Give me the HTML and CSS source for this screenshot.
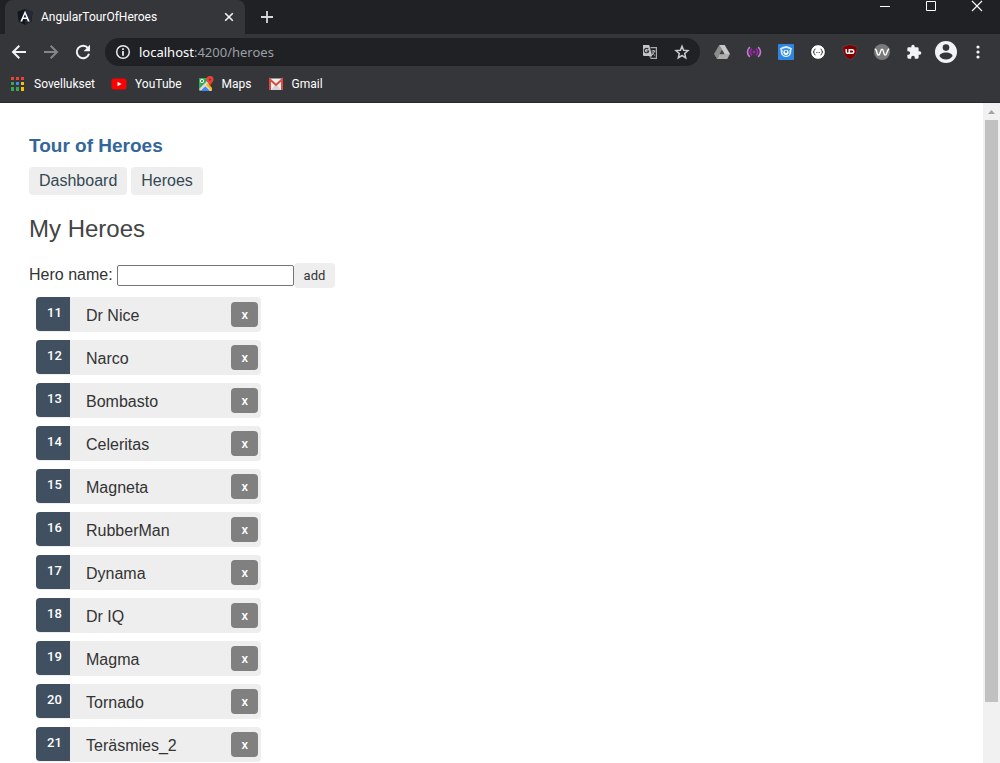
FILE: index.html
```html
<!DOCTYPE html>
<html lang="en">
<head>
<meta charset="utf-8">
<title>AngularTourOfHeroes</title>
<link rel="stylesheet" href="styles.css">
</head>
<body>
<header class="browser">
  <div class="tabstrip">
    <div class="tab">
      <svg class="favicon" width="16" height="16" viewBox="0 0 16 16"><path fill="#11151d" d="M8 0 15.5 2.7 14.3 12.5 8 16 1.7 12.5.5 2.7z"/><path fill="#242938" d="M8 0 15.5 2.7 14.3 12.5 8 16z"/><path fill="#fff" fill-rule="evenodd" d="M8 1.8 3.3 12.4h1.9l.9-2.4h3.8l.9 2.4h1.9zM8 5.3 9.4 8.5H6.6z"/></svg>
      <span class="tab-title">AngularTourOfHeroes</span>
      <button class="icon-btn" aria-label="Close tab"><svg width="16" height="16" viewBox="0 0 16 16"><path stroke="#f1f3f4" stroke-width="1.6" d="m4.2 4.2 7.6 7.6m0-7.6-7.6 7.6"/></svg></button>
    </div>
    <button class="icon-btn new-tab" aria-label="New tab"><svg width="16" height="16" viewBox="0 0 16 16"><path stroke="#d5d7da" stroke-width="1.8" d="M8 2v12M2 8h12"/></svg></button>
    <div class="window-controls">
      <button class="icon-btn" aria-label="Minimize"><svg width="12" height="12" viewBox="0 0 12 12"><path stroke="#fff" d="M1 6.500h10"/></svg></button>
      <button class="icon-btn" aria-label="Maximize"><svg width="12" height="12" viewBox="0 0 12 12"><path fill="none" stroke="#fff" d="M1.500 1.500h9v9h-9z"/></svg></button>
      <button class="icon-btn" aria-label="Close"><svg width="12" height="12" viewBox="0 0 12 12"><path stroke="#fff" stroke-width="1.100" d="m1 1 10 10M11 1 1 11"/></svg></button>
    </div>
  </div>
  <div class="toolbar">
    <div class="nav-buttons">
      <button class="icon-btn" aria-label="Back"><svg width="16" height="16" viewBox="0 0 16 16"><path fill="none" stroke="#f1f3f4" stroke-width="2" d="M15 8H2.500M8.300 1.700 2 8l6.300 6.300"/></svg></button>
      <button class="icon-btn" aria-label="Forward"><svg width="16" height="16" viewBox="0 0 16 16"><path fill="none" stroke="#85868a" stroke-width="2" d="M1 8h12.500M7.700 1.700 14 8l-6.300 6.300"/></svg></button>
      <button class="icon-btn" aria-label="Reload"><svg width="16" height="16" viewBox="0 0 16 16"><path fill="none" stroke="#f1f3f4" stroke-width="2" d="M13 4.200A6.200 6.200 0 1 0 14 9.800"/><path fill="#f1f3f4" d="M15 .8v6.400H8.600z"/></svg></button>
    </div>
    <div class="address">
      <svg width="16" height="16" viewBox="0 0 16 16"><circle cx="8" cy="8" r="6.300" fill="none" stroke="#e8eaed" stroke-width="1.500"/><path fill="#e8eaed" d="M7.100 7h1.800v4.700H7.100zM7.100 4.200h1.800V6H7.100z"/></svg>
      <span class="url"><span class="host">localhost</span>:4200/heroes</span>
      <button class="icon-btn" aria-label="Translate"><svg width="16" height="16" viewBox="0 0 16 16"><path fill="none" stroke="#a9abad" stroke-width="1.200" d="M8.500 3.600h5.900v10.800H8.500"/><path fill="#c4c6c8" d="M1 1h6.200L10.200 12H2q-1 0-1-1z"/><path fill="#85878a" d="M7 12h3.200l-2 2.600z"/><path fill="none" stroke="#303134" stroke-width="1.200" d="M6.300 5.200A2.200 2.200 0 1 0 6.700 7H4.600"/><path fill="none" stroke="#bfc1c3" d="M9.400 7h4M11.400 6v1M12.600 7q-.6 2.400-2.600 4M10.200 8.300q1 1.900 2.700 3.200"/></svg></button>
      <button class="icon-btn" aria-label="Bookmark"><svg width="16" height="16" viewBox="0 0 16 16"><path fill="none" stroke="#c8cacc" stroke-width="1.500" d="m8 2.200 1.600 4 4.400.4-3.300 2.900 1 4.300L8 11.500l-3.700 2.300 1-4.300L2 6.600l4.400-.4z"/></svg></button>
    </div>
    <div class="extensions">
      <button class="icon-btn" aria-label="Drive"><svg width="16" height="16" viewBox="0 0 16 16"><path fill="#8b8b8b" d="M5.200 1 8 5.800 3 15 0 10z"/><path fill="#c8c8c8" d="M5.200 1h5.500L16 10h-5.500z"/><path fill="#adadad" d="M5.500 10H16l-2.800 5H3z"/><path fill="#454649" d="m8 6.200 2.300 4H5.700z"/></svg></button>
      <button class="icon-btn" aria-label="Broadcast"><svg width="16" height="16" viewBox="0 0 16 16"><g fill="none" stroke-width="1.600"><path stroke="#c47bd0" d="M3.800 3Q-.8 8 3.800 13M12.200 3q4.600 5 0 10"/><path stroke="#a21fb5" d="M6 4.600Q2.700 8 6 11.400M10 4.600q3.300 3.400 0 6.800"/></g><circle cx="8" cy="8" r="1.400" fill="#a21fb5"/></svg></button>
      <button class="icon-btn" aria-label="Blue extension"><svg width="16" height="16" viewBox="0 0 16 16"><rect width="16" height="16" rx="1" fill="#2f86de"/><path fill="#d9ecfb" d="M1.800 4.400q6.200-5 12.400 0-1 .8-.9 3.400A5.300 5.300 0 0 1 2.700 7.800Q2.800 5.200 1.800 4.400z"/><path fill="none" stroke="#2f86de" stroke-width="1.200" d="M4 6q4-3 8 0"/><circle cx="8" cy="8.300" r="3.500" fill="#2f86de"/><circle cx="8" cy="8.300" r="2.600" fill="#fff"/><circle cx="8" cy="7.800" r="1.200" fill="#2f86de"/></svg></button>
      <button class="icon-btn" aria-label="JSON viewer"><svg width="16" height="16" viewBox="0 0 16 16"><circle cx="8" cy="8" r="7.400" fill="#fff" stroke="#222"/><g fill="none" stroke="#333"><path d="M5.500 5Q4.200 5 4.200 6.600T3 8q1.200 0 1.200 1.400T5.500 11M10.500 5q1.300 0 1.300 1.600T13 8q-1.200 0-1.200 1.400T10.500 11"/></g><path fill="#777" d="M6 8h1v1H6zM7.500 8h1v1h-1zM9 8h1v1H9z"/></svg></button>
      <button class="icon-btn" aria-label="Shield"><svg width="16" height="16" viewBox="0 0 16 16"><path fill="#800000" stroke="#575255" stroke-width=".6" d="M8 .4Q11 2 15 2.200C15 9 14.200 12.500 8 15.700 1.800 12.500 1 9 1 2.200 5 2 8 .4 8 .4z"/><g fill="none" stroke="#fff" stroke-width="1.400"><path d="M4.200 5v3q0 1.300 1.300 1.300h1.700V5"/><path d="M7.200 5.700H10q1.800 0 1.800 1.800T10 9.300H7.200"/></g></svg></button>
      <button class="icon-btn" aria-label="W extension"><svg width="16" height="16" viewBox="0 0 16 16"><circle cx="8" cy="8" r="8" fill="#7a7a7a"/><path fill="none" stroke="#fff" stroke-width="1.400" d="M.8 5q1.500.2 2 2.800.7 3.300 1.700 3.300c2 0 1.600-5.900 3.500-5.900s1.300 5.900 3.300 5.900S13 5 15.200 5"/></svg></button>
      <button class="icon-btn" aria-label="Extensions"><svg width="16" height="16" viewBox="0 0 24 24"><path fill="#f1f3f4" d="M20.500 11H19V7a2 2 0 0 0-2-2h-4V3.500a2.500 2.500 0 0 0-5 0V5H4a2 2 0 0 0-2 2v3.800h1.500a2.700 2.700 0 0 1 0 5.400H2V20a2 2 0 0 0 2 2h3.800v-1.500a2.700 2.700 0 0 1 5.400 0V22H17a2 2 0 0 0 2-2v-4h1.500a2.500 2.500 0 0 0 0-5z"/></svg></button>
      <button class="icon-btn" aria-label="Profile"><svg width="22" height="22" viewBox="0 0 22 22"><circle cx="11" cy="11" r="11" fill="#f1f3f4"/><circle cx="11" cy="6.600" r="3.300" fill="#35363a"/><path fill="#35363a" d="M4.500 15.300c0-2.500 3.500-3.700 6.500-3.700s6.500 1.200 6.500 3.700c-1.500 2-3.800 3.300-6.500 3.300s-5-1.300-6.500-3.300z"/></svg></button>
      <button class="icon-btn" aria-label="Menu"><svg width="16" height="16" viewBox="0 0 16 16"><g fill="#f1f3f4"><circle cx="8" cy="3" r="1.600"/><circle cx="8" cy="8" r="1.600"/><circle cx="8" cy="13" r="1.600"/></g></svg></button>
    </div>
  </div>
  <nav class="bookmarks" aria-label="Bookmarks">
    <a href="#"><svg width="16" height="16" viewBox="0 0 16 16"><path fill="#ea4335" d="M1 1h3v3H1zM6 1h3v3H6zM11 1h3v3h-3z"/><path fill="#34a853" d="M1 6h3v3H1zM1 11h3v4H1zM6 11h3v4H6z"/><path fill="#4285f4" d="M6 6h3v3H6z"/><path fill="#fbbc05" d="M11 6h3v3h-3zM11 11h3v4h-3z"/></svg>Sovellukset</a>
    <a href="#"><svg width="16" height="16" viewBox="0 0 16 16"><rect x=".5" y="2.500" width="15" height="11" rx="2.500" fill="#f00"/><path fill="#fff" d="m6.500 5.700 4.200 2.300-4.200 2.300z"/></svg>YouTube</a>
    <a href="#"><svg width="16" height="16" viewBox="0 0 16 16"><path fill="#34a853" d="M1 2h10v6L2 15H1z"/><path fill="#d5d9dd" d="m1 13 8-8 5 9-1 1H11L7 11l-4 4z"/><path fill="#4285f4" d="m3 15 4.500-4.500L12 15z"/><path fill="#fbbc05" d="m8 9 2-2 4 5v3z"/><circle cx="4" cy="5" r="1.700" fill="none" stroke="#fff"/><path fill="#ea4335" d="M12 0a3.500 3.500 0 0 1 3.500 3.600C15.500 6.500 12.600 7 12 11 11.400 7 8.500 6.500 8.500 3.600A3.500 3.500 0 0 1 12 0z"/><circle cx="12" cy="3.600" r="1.200" fill="#9f2c25"/></svg>Maps</a>
    <a href="#"><svg width="16" height="16" viewBox="0 0 16 16"><rect x="1" y="2.500" width="14" height="11.500" rx="1" fill="#f1f1f1"/><path fill="#d5d5d5" d="m3 14 5-6 5 6z"/><path fill="none" stroke="#dd4b3e" stroke-width="2" d="M2 14V3.500l6 5.500 6-5.500V14"/></svg>Gmail</a>
  </nav>
</header>
<div class="viewport">
  <main class="page">
    <h1>Tour of Heroes</h1>
    <nav class="routes">
      <a href="#">Dashboard</a>
      <a href="#">Heroes</a>
    </nav>
    <h2>My Heroes</h2>
    <form class="add-form">
      <label for="hero-name">Hero name:</label>
      <input id="hero-name" type="text">
      <button type="button">add</button>
    </form>
    <ul class="heroes">
      <li><a href="#"><span class="badge">11</span><span class="name">Dr Nice</span></a><button class="delete" title="delete hero">x</button></li>
      <li><a href="#"><span class="badge">12</span><span class="name">Narco</span></a><button class="delete" title="delete hero">x</button></li>
      <li><a href="#"><span class="badge">13</span><span class="name">Bombasto</span></a><button class="delete" title="delete hero">x</button></li>
      <li><a href="#"><span class="badge">14</span><span class="name">Celeritas</span></a><button class="delete" title="delete hero">x</button></li>
      <li><a href="#"><span class="badge">15</span><span class="name">Magneta</span></a><button class="delete" title="delete hero">x</button></li>
      <li><a href="#"><span class="badge">16</span><span class="name">RubberMan</span></a><button class="delete" title="delete hero">x</button></li>
      <li><a href="#"><span class="badge">17</span><span class="name">Dynama</span></a><button class="delete" title="delete hero">x</button></li>
      <li><a href="#"><span class="badge">18</span><span class="name">Dr IQ</span></a><button class="delete" title="delete hero">x</button></li>
      <li><a href="#"><span class="badge">19</span><span class="name">Magma</span></a><button class="delete" title="delete hero">x</button></li>
      <li><a href="#"><span class="badge">20</span><span class="name">Tornado</span></a><button class="delete" title="delete hero">x</button></li>
      <li><a href="#"><span class="badge">21</span><span class="name">Teräsmies_2</span></a><button class="delete" title="delete hero">x</button></li>
    </ul>
  </main>
  <div class="scrollbar" aria-hidden="true">
    <svg width="17" height="17" viewBox="0 0 17 17"><path fill="#a3a3a3" d="m5 11 3.500-4 3.500 4z"/></svg>
    <div class="thumb"></div>
    <div class="track"></div>
  </div>
</div>
</body>
</html>
```

FILE: styles.css
```css
* { box-sizing: border-box; }

body {
  margin: 0;
  height: 100vh;
  display: flex;
  flex-direction: column;
  overflow: hidden;
  background: #fff;
  color: #333;
  font: 16px/20px "Liberation Sans", Arial, sans-serif;
}

a { color: inherit; text-decoration: none; }
button { border: 0; font-family: Roboto, Arial, sans-serif; cursor: pointer; }
svg { display: block; flex: none; }

/* Browser frame */
.browser {
  flex: none;
  background: #35363a;
  border-bottom: 1px solid #28292b;
  color: #fff;
  font: 12px/16px Roboto, "Open Sans", sans-serif;
}

.icon-btn { padding: 0; background: none; }

.tabstrip {
  display: flex;
  height: 34px;
  padding-left: 5px;
  background: #202124;
}

.tab {
  display: flex;
  align-items: center;
  width: 240px;
  padding: 0 8px 0 12px;
  border-radius: 8px 8px 0 0;
  background: #35363a;
}

.tab-title { flex: 1; margin-left: 8px; }
.new-tab { margin-left: 14px; }

.window-controls {
  display: flex;
  align-items: flex-start;
  gap: 34px;
  margin-left: auto;
  padding-right: 17px;
}

.toolbar {
  display: flex;
  align-items: center;
  height: 36px;
  padding: 0 14px 0 11px;
}

.nav-buttons { display: flex; gap: 16px; }

.address {
  flex: 1;
  display: flex;
  align-items: center;
  gap: 16px;
  height: 28px;
  margin-left: 14px;
  padding: 0 10px;
  border-radius: 14px;
  background: #202124;
}

.url {
  flex: 1;
  margin-left: -8px;
  color: #9aa0a6;
  font-family: "Noto Sans", "Open Sans", sans-serif;
  font-size: 13px;
}

.host { color: #fff; }

.extensions {
  display: flex;
  align-items: center;
  gap: 16px;
  margin-left: 14px;
}

.extensions .icon-btn:nth-last-child(2) { margin: 0 -3px; }

.bookmarks {
  display: flex;
  gap: 16px;
  height: 32px;
  padding: 0 10px 4px;
}

.bookmarks a {
  display: flex;
  align-items: center;
  gap: 8px;
}

/* Page */
.viewport {
  flex: 1;
  display: flex;
  min-height: 0;
}

.page {
  flex: 1;
  padding: 32px 29px 0;
  overflow: hidden;
}

h1 {
  margin: 0 0 10px;
  color: #369;
  font-size: 19px;
  line-height: 22px;
}

.routes { display: flex; gap: 4px; }

.routes a {
  padding: 4px 10px;
  border-radius: 4px;
  background: #eee;
  color: #334953;
}

h2 {
  margin: 20px 0;
  color: #444;
  font-size: 24px;
  font-weight: 400;
  line-height: 28px;
}

.add-form { display: flex; align-items: center; }

.add-form label { padding-bottom: 2px; }

.add-form input {
  width: 177px;
  height: 21px;
  margin-left: 4px;
  padding: 1px 2px;
  border: 1px solid #767676;
  border-radius: 2px;
  font-size: 13px;
}

.add-form button {
  padding: 5px 10px;
  border-radius: 4px;
  background: #eee;
  color: #333;
  font-size: 13px;
  line-height: 15px;
}

.heroes {
  display: flex;
  flex-direction: column;
  gap: 8px;
  width: 225px;
  margin: 9px 0 8px 7px;
  padding: 0;
  list-style: none;
}

.heroes li {
  display: flex;
  align-items: center;
  padding-right: 3px;
  border-radius: 4px;
  background: #eee;
}

.heroes a {
  flex: 1;
  display: flex;
  align-items: flex-start;
  gap: 16px;
}

.name {
  padding-top: 3px;
  line-height: 32px;
}

.badge {
  width: 34px;
  padding: 0 0 2px 3px;
  border-radius: 4px 0 0 4px;
  background: #405061;
  color: #fff;
  font-family: Roboto, Arial, sans-serif;
  font-size: 13px;
  font-weight: 500;
  line-height: 32px;
  text-align: center;
}

.delete {
  padding: 5px 10px;
  border-radius: 4px;
  background: gray;
  color: #fff;
  font-size: 13px;
  font-weight: 500;
  line-height: 15px;
}

.scrollbar {
  display: flex;
  flex-direction: column;
  width: 17px;
  background: #f1f1f1;
}

.thumb {
  flex: 19;
  margin: 0 2px;
  background: #c1c1c1;
}

.track { flex: 2; }
```
